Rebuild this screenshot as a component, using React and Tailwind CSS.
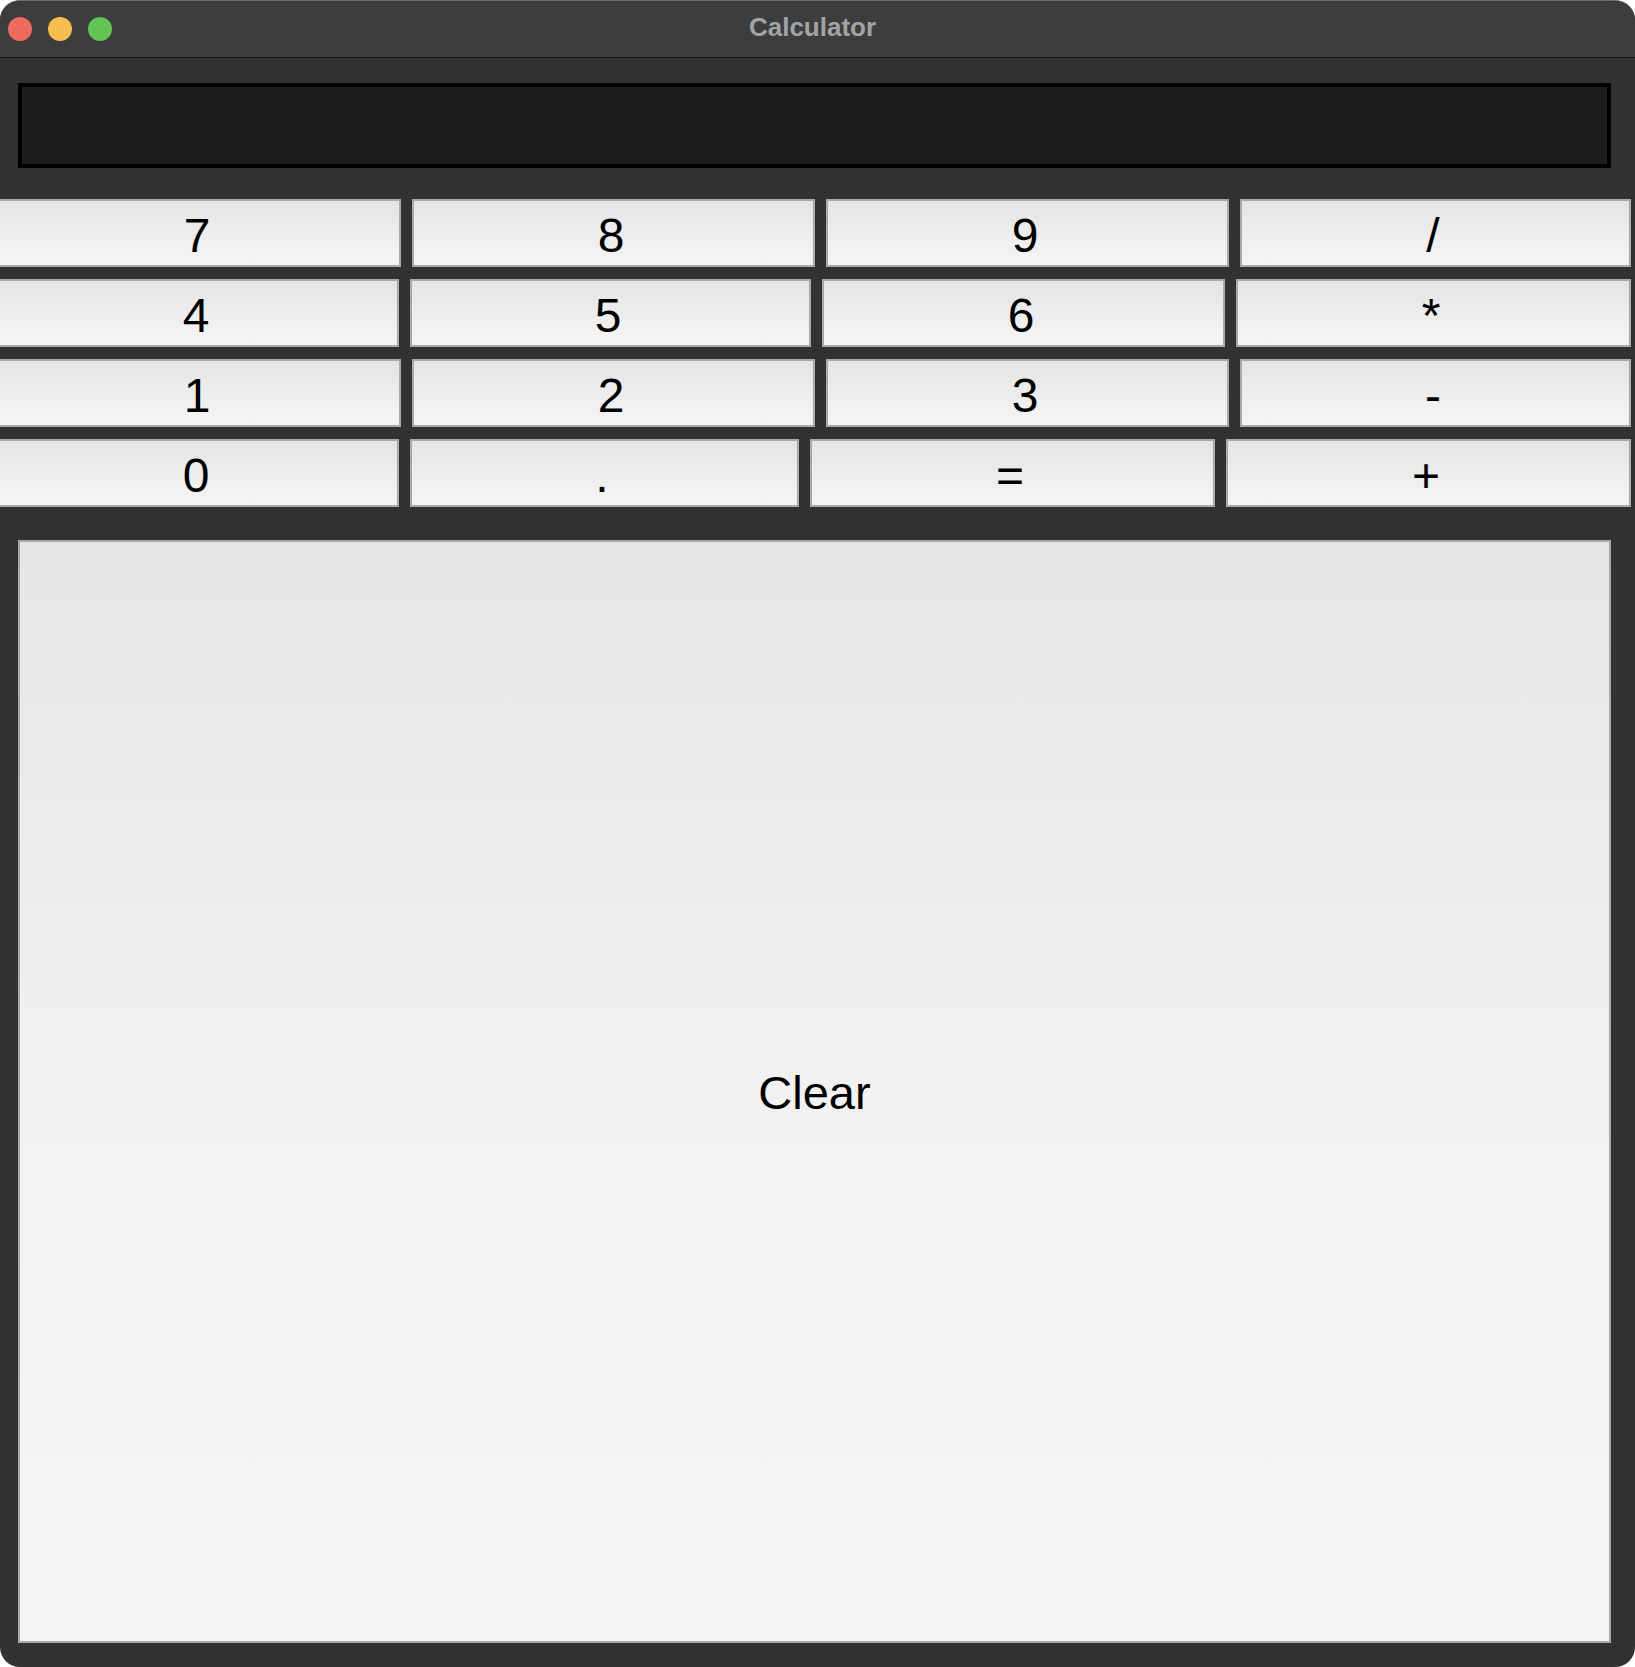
import React, { useState } from 'react';

const rows = [
  [
    { label: '7', w: 'w-[403px]' },
    { label: '8', w: 'w-[403px]' },
    { label: '9', w: 'w-[403px]' },
    { label: '/', w: 'w-[391px]' },
  ],
  [
    { label: '4', w: 'w-[401px]' },
    { label: '5', w: 'w-[401px]' },
    { label: '6', w: 'w-[403px]' },
    { label: '*', w: 'w-[395px]' },
  ],
  [
    { label: '1', w: 'w-[403px]' },
    { label: '2', w: 'w-[403px]' },
    { label: '3', w: 'w-[403px]' },
    { label: '-', w: 'w-[391px]' },
  ],
  [
    { label: '0', w: 'w-[401px]' },
    { label: '.', w: 'w-[389px]' },
    { label: '=', w: 'w-[405px]' },
    { label: '+', w: 'w-[405px]' },
  ],
];

const KeyButton = ({ label, w, onClick }) => (
  <button
    onClick={() => onClick(label)}
    className={`${w} h-[68px] shrink-0 border-2 border-[#a9a9a9] bg-linear-to-b from-[#e4e4e4] to-[#f5f5f5] pt-[6px] pr-[5px] text-[48px] leading-none text-black flex items-center justify-center`}
  >
    {label}
  </button>
);

const App = () => {
  const [display, setDisplay] = useState('');

  const handleKey = (key) => {
    if (key === '=') {
      try {
        // eslint-disable-next-line no-new-func
        setDisplay(String(Function(`return (${display})`)()));
      } catch (e) {
        setDisplay('Error');
      }
      return;
    }
    setDisplay((prev) => prev + key);
  };

  return (
    <div className="w-[1635px] h-[1667px] bg-white font-['Liberation_Sans',Arial,sans-serif]">
      <div className="w-full h-full rounded-[20px] overflow-hidden border-t border-[#707070] bg-[#323232] flex flex-col">
        {/* Title bar */}
        <div className="relative h-[57px] shrink-0 bg-[#3c3d3f] border-b border-[#161616] flex items-center justify-center">
          <div className="absolute left-[8px] top-[16px] flex gap-[16px]">
            <span className="w-[24px] h-[24px] rounded-full bg-[#ee6a5f]" />
            <span className="w-[24px] h-[24px] rounded-full bg-[#f5be4f]" />
            <span className="w-[24px] h-[24px] rounded-full bg-[#62c554]" />
          </div>
          <span className="mr-[10px] -mt-[3px] text-[26px] font-bold text-[#a3a3a3]">Calculator</span>
        </div>

        {/* Display */}
        <div className="mt-[25px] ml-[18px] w-[1593px] h-[85px] border-4 border-black bg-[#1d1d1d] text-white text-[40px] px-3 flex items-center overflow-hidden">
          {display}
        </div>

        {/* Keypad */}
        <div className="mt-[31px] -ml-[2px] flex flex-col gap-[12px]">
          {rows.map((row, i) => (
            <div key={i} className="flex gap-[11px]">
              {row.map((b) => (
                <KeyButton key={b.label} label={b.label} w={b.w} onClick={handleKey} />
              ))}
            </div>
          ))}
        </div>

        {/* Clear */}
        <button
          onClick={() => setDisplay('')}
          className="mt-[33px] ml-[18px] w-[1593px] h-[1103px] border-2 border-[#a9a9a9] bg-linear-to-b from-[#e5e5e5] via-[#f1f1f1] to-[#f5f5f5] pt-[4px] text-[47px] text-black flex items-center justify-center"
        >
          Clear
        </button>
      </div>
    </div>
  );
};

export default App;
